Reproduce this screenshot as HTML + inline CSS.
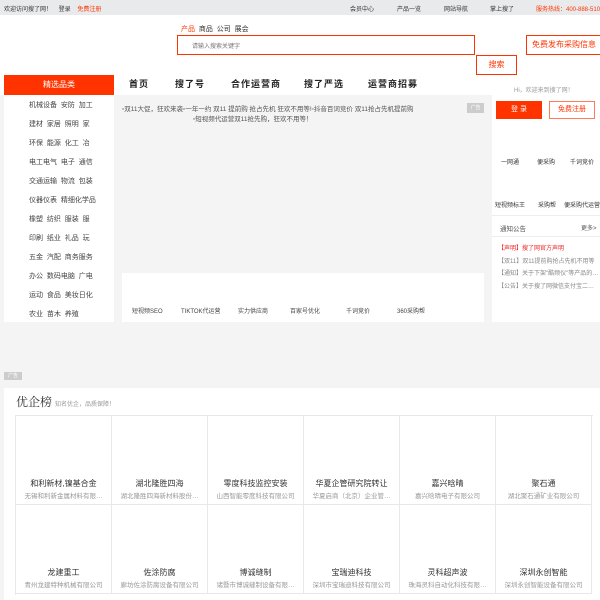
<!DOCTYPE html>
<html><head><meta charset="utf-8"><style>
*{margin:0;padding:0;box-sizing:border-box}
body{width:600px;height:600px;overflow:hidden;position:relative;background:#f4f4f4;font-family:"Liberation Sans","Noto Sans CJK SC",sans-serif;color:#333;font-size:7px}
.a{position:absolute;white-space:nowrap}
.top{left:0;top:0;width:600px;height:15px;background:#e9eaec}
.hdr{left:0;top:15px;width:600px;height:80px;background:#fff}
.red{color:#ff3300}
.cat{left:4px;top:75px;width:110px;height:20px;background:#ff3300;color:#fff;font-size:8px;text-align:center;line-height:20px}
.side{left:4px;top:95px;width:110px;height:227px;background:#fff}
.side div{position:absolute;left:25px;font-size:7px;color:#444}
.nav{top:77px;font-size:9px;font-weight:bold;color:#222;letter-spacing:1px}
.cell{position:absolute;width:96px;height:89px;border-right:1px solid #e8e8e8;border-bottom:1px solid #e8e8e8;text-align:center}
.cell b{position:absolute;left:0;right:0;top:62px;font-weight:normal;font-size:8px;color:#333}
.cell i{position:absolute;left:2px;right:2px;top:74px;font-style:normal;font-size:6.5px;color:#999;overflow:hidden}
</style></head><body>
<div class="a top"></div>
<div class="a" style="left:4px;top:4px;font-size:6px">欢迎访问搜了网！&nbsp;&nbsp;&nbsp;&nbsp;登录&nbsp;&nbsp;&nbsp;&nbsp;<span class="red">免费注册</span></div>
<div class="a" style="left:350px;top:4px;font-size:6px">会员中心</div>
<div class="a" style="left:397px;top:4px;font-size:6px">产品一览</div>
<div class="a" style="left:444px;top:4px;font-size:6px">网站导航</div>
<div class="a" style="left:490px;top:4px;font-size:6px">掌上搜了</div>
<div class="a red" style="left:536px;top:4px;font-size:6px">服务热线：400-888-5100</div>
<div class="a hdr"></div>
<div class="a" style="left:181px;top:24px;font-size:7px"><span class="red">产品</span>&nbsp;&nbsp;商品&nbsp;&nbsp;公司&nbsp;&nbsp;展会</div>
<div class="a" style="left:177px;top:35px;width:298px;height:20px;border:1px solid #ff3300;background:#fff"><span class="a" style="left:14px;top:5px;color:#777;font-size:6px">请输入搜索关键字</span></div>
<div class="a red" style="left:476px;top:55px;width:41px;height:20px;border:1px solid #ff3300;background:#fff;text-align:center;line-height:18px;font-size:8px">搜索</div>
<div class="a red" style="left:526px;top:35px;width:80px;height:20px;border:1px solid #ff3300;background:#fff;line-height:18px;padding-left:5px;font-size:8px">免费发布采购信息</div>
<div class="a cat">精选品类</div>
<div class="a nav" style="left:129px">首页</div>
<div class="a nav" style="left:175px">搜了号</div>
<div class="a nav" style="left:231px">合作运营商</div>
<div class="a nav" style="left:304px">搜了严选</div>
<div class="a nav" style="left:368px">运营商招募</div>
<div class="a" style="left:514px;top:85px;font-size:6px;color:#999">Hi，欢迎来到搜了网！</div>
<div class="a side">
<div style="top:5px">机械设备&nbsp;&nbsp;安防&nbsp;&nbsp;加工</div>
<div style="top:24px">建材&nbsp;&nbsp;家居&nbsp;&nbsp;照明&nbsp;&nbsp;家</div>
<div style="top:43px">环保&nbsp;&nbsp;能源&nbsp;&nbsp;化工&nbsp;&nbsp;冶</div>
<div style="top:62px">电工电气&nbsp;&nbsp;电子&nbsp;&nbsp;通信</div>
<div style="top:81px">交通运输&nbsp;&nbsp;物流&nbsp;&nbsp;包装</div>
<div style="top:100px">仪器仪表&nbsp;&nbsp;精细化学品</div>
<div style="top:119px">橡塑&nbsp;&nbsp;纺织&nbsp;&nbsp;服装&nbsp;&nbsp;服</div>
<div style="top:138px">印刷&nbsp;&nbsp;纸业&nbsp;&nbsp;礼品&nbsp;&nbsp;玩</div>
<div style="top:157px">五金&nbsp;&nbsp;汽配&nbsp;&nbsp;商务服务</div>
<div style="top:176px">办公&nbsp;&nbsp;数码电脑&nbsp;&nbsp;广电</div>
<div style="top:195px">运动&nbsp;&nbsp;食品&nbsp;&nbsp;美妆日化</div>
<div style="top:214px">农业&nbsp;&nbsp;苗木&nbsp;&nbsp;养殖</div>
</div>
<div class="a" style="left:122px;top:103px;font-size:6.5px;color:#555">▫双11大促，狂欢来袭▫一年一约 双11 提前购 抢占先机 狂欢不用等!▫抖音百词竞价 双11抢占先机提前购</div>
<div class="a" style="left:193px;top:113px;font-size:6.5px;color:#555">▫短视频代运营双11抢先购，狂欢不用等！</div>
<div class="a" style="left:467px;top:103px;width:17px;height:10px;background:#ccc;color:#fff;font-size:5px;text-align:center;line-height:10px">广告</div>
<div class="a" style="left:122px;top:273px;width:362px;height:49px;background:#fff"></div>
<div class="a" style="left:132px;top:306px;font-size:6px;color:#444">短视频SEO</div>
<div class="a" style="left:181px;top:306px;font-size:6px;color:#444">TIKTOK代运营</div>
<div class="a" style="left:238px;top:306px;font-size:6px;color:#444">实力供应商</div>
<div class="a" style="left:290px;top:306px;font-size:6px;color:#444">百家号优化</div>
<div class="a" style="left:346px;top:306px;font-size:6px;color:#444">千词竞价</div>
<div class="a" style="left:397px;top:306px;font-size:6px;color:#444">360采购帮</div>
<div class="a" style="left:492px;top:95px;width:108px;height:227px;background:#fff"></div>
<div class="a" style="left:496px;top:101px;width:46px;height:18px;background:#ff3300;color:#fff;text-align:center;line-height:18px;font-size:7px">登 录</div>
<div class="a red" style="left:549px;top:101px;width:46px;height:18px;border:1px solid #ff7a55;text-align:center;line-height:16px;font-size:7px">免费注册</div>
<div class="a" style="left:501px;top:157px;font-size:6px">一网通</div>
<div class="a" style="left:537px;top:157px;font-size:6px">便采购</div>
<div class="a" style="left:570px;top:157px;font-size:6px">千词竞价</div>
<div class="a" style="left:495px;top:200px;font-size:6px">短视频标王</div>
<div class="a" style="left:538px;top:200px;font-size:6px">采购帮</div>
<div class="a" style="left:564px;top:200px;font-size:6px">便采购代运营</div>
<div class="a" style="left:492px;top:215px;width:108px;height:1px;background:#eee"></div>
<div class="a" style="left:500px;top:223px;font-size:6.5px;color:#555">通知公告</div>
<div class="a" style="left:581px;top:223px;font-size:6px;color:#555">更多&gt;</div>
<div class="a" style="left:492px;top:236px;width:108px;height:1px;background:#eee"></div>
<div class="a" style="left:498px;top:243px;font-size:6px;color:#e22">【声明】搜了网官方声明</div>
<div class="a" style="left:498px;top:256px;font-size:6px;color:#888">【双11】双11提前购抢占先机不用等</div>
<div class="a" style="left:498px;top:268px;font-size:6px;color:#888">【通知】关于下架"酷频仪"等产品的…</div>
<div class="a" style="left:498px;top:281px;font-size:6px;color:#888">【公告】关于搜了网微信支付宝二…</div>
<div class="a" style="left:4px;top:372px;width:18px;height:8px;background:#ccc;color:#fff;font-size:5px;text-align:center;line-height:8px">广告</div>
<div class="a" style="left:4px;top:388px;width:596px;height:212px;background:#fff"></div>
<div class="a" style="left:16px;top:393px;font-size:12px;font-family:'Liberation Serif','Noto Serif CJK SC',serif;color:#333">优企榜 <span style="font-size:6px;color:#999;font-family:'Liberation Sans','Noto Sans CJK SC',sans-serif">知名优企，品质保障！</span></div>
<div class="a" style="left:15px;top:415px;width:578px;height:180px;border-left:1px solid #e8e8e8;border-top:1px solid #e8e8e8">
<div class="cell" style="left:0;top:0"><b>和利新材,镍基合金</b><i>无锡和利新金属材料有限…</i></div>
<div class="cell" style="left:96px;top:0"><b>湖北隆胜四海</b><i>湖北隆胜四海新材料股份…</i></div>
<div class="cell" style="left:192px;top:0"><b>零度科技监控安装</b><i>山西智能零度科技有限公司</i></div>
<div class="cell" style="left:288px;top:0"><b>华夏企管研究院转让</b><i>华夏启商（北京）企业管…</i></div>
<div class="cell" style="left:384px;top:0"><b>嘉兴晗晴</b><i>嘉兴晗晴电子有限公司</i></div>
<div class="cell" style="left:480px;top:0"><b>聚石通</b><i>湖北聚石通矿业有限公司</i></div>
<div class="cell" style="left:0;top:89px"><b>龙建重工</b><i>青州龙建特种机械有限公司</i></div>
<div class="cell" style="left:96px;top:89px"><b>佐涂防腐</b><i>廊坊佐涂防腐设备有限公司</i></div>
<div class="cell" style="left:192px;top:89px"><b>博诚缝制</b><i>诸暨市博诚缝制设备有限…</i></div>
<div class="cell" style="left:288px;top:89px"><b>宝瑞迪科技</b><i>深圳市宝瑞迪科技有限公司</i></div>
<div class="cell" style="left:384px;top:89px"><b>灵科超声波</b><i>珠海灵科自动化科技有限…</i></div>
<div class="cell" style="left:480px;top:89px"><b>深圳永创智能</b><i>深圳永创智能设备有限公司</i></div>
</div>
</body></html>
